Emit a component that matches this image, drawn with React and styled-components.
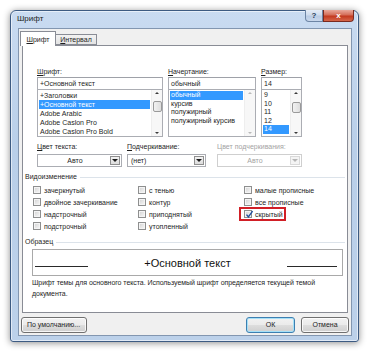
import styled, { createGlobalStyle } from 'styled-components';

const GlobalStyle = createGlobalStyle`
    html, body {
        margin: 0;
        padding: 0;
        background: #ffffff;
    }
    body {
        width: 369px;
        height: 354px;
        overflow: hidden;
        font-family: "Liberation Sans", Arial, sans-serif;
        font-size: 7px;
        color: #1e1e1e;
    }
    * {
        box-sizing: border-box;
    }
`

const Window = styled.div`
    margin: 10px 0 0 10px;
    width: 349px;
    height: 332px;
    border: 1px solid #3d5b82;
    border-radius: 6px 6px 3px 3px;
    background: linear-gradient(180deg, #c9dbf1 0%, #b9cfe9 40%, #bcd1ea 100%);
    box-shadow: 0 1px 7px rgba(0, 0, 0, 0.45), inset 0 0 0 1px rgba(255, 255, 255, 0.55);
    display: flex;
    flex-direction: column;
    padding: 0 6px 5px 7px;
`

const TitleBar = styled.div`
    height: 17px;
    display: flex;
    justify-content: space-between;
    align-items: flex-start;
`

const Title = styled.div`
    padding-top: 3px;
    margin-left: -1px;
    line-height: 9px;
    font-size: 8px;
    color: #1b1b1b;
`

const CaptionButtons = styled.div`
    display: flex;
    margin-top: -1px;
    margin-right: -2px;
`

const CaptionButton = styled.div`
    width: ${props => props.w};
    height: 12px;
    display: flex;
    align-items: center;
    justify-content: center;
    border: 1px solid ${props => props.close ? '#7a2a1f' : '#6d85a5'};
    border-top: none;
    border-radius: ${props => props.close ? '0 0 4px 0' : '0 0 0 4px'};
    background: ${props => props.close
        ? 'linear-gradient(180deg, #e9a99b 0%, #d46d58 45%, #c3391f 55%, #d5664a 100%)'
        : 'linear-gradient(180deg, #e4ecf6 0%, #cfdcee 45%, #b9cbe4 55%, #c9d8ec 100%)'};
    color: ${props => props.close ? '#ffffff' : '#2b3f5c'};
    font-size: 8px;
    font-weight: bold;
    line-height: 1;
`

const Client = styled.div`
    flex: 1;
    background: #f0f0f0;
    border: 1px solid #8296b0;
    padding: 2px 0 0 1px;
    display: flex;
    flex-direction: column;
`

const TabStrip = styled.div`
    height: 14px;
    display: flex;
    align-items: flex-end;
`

const Tab = styled.div`
    position: relative;
    z-index: ${props => props.active ? 2 : 0};
    width: ${props => props.w};
    height: ${props => props.active ? '15px' : '11px'};
    margin-bottom: ${props => props.active ? '-1px' : '0'};
    border: 1px solid #898c95;
    border-bottom: ${props => props.active ? 'none' : '1px solid #898c95'};
    border-left: ${props => props.noLeft ? 'none' : '1px solid #898c95'};
    background: ${props => props.active ? '#ffffff' : 'linear-gradient(180deg, #f2f2f2, #e3e3e3)'};
    display: flex;
    justify-content: center;
    padding-top: ${props => props.active ? '4px' : '1px'};
    line-height: 8px;
`

const Panel = styled.div`
    position: relative;
    z-index: 1;
    margin-left: 2px;
    width: 326px;
    height: 268px;
    background: #ffffff;
    border: 1px solid #898c95;
`

const FontBlock = styled.div`
    padding: 21px 0 0 14px;
`

const Row = styled.div`
    display: flex;
    gap: ${props => props.gap};
    margin-top: ${props => props.mt || '0'};
`

const Column = styled.div`
    width: ${props => props.w};
    margin-left: ${props => props.ml || '0'};
    display: flex;
    flex-direction: column;
`

const Label = styled.div`
    height: 10px;
    line-height: 10px;
    margin-bottom: ${props => props.mb || '0'};
    color: ${props => props.disabled ? '#a3a3a3' : '#1e1e1e'};
    white-space: nowrap;

    u {
        text-decoration-thickness: 1px;
        text-underline-offset: 1px;
    }
`

const Input = styled.div`
    height: 13px;
    border: 1px solid #abadb3;
    border-top-color: #9ea1a8;
    padding-left: 2px;
    line-height: 11px;
    white-space: nowrap;
    overflow: hidden;
`

const List = styled.div`
    height: 47px;
    border: 1px solid #abadb3;
    border-top: none;
    display: flex;
`

const ListItems = styled.div`
    flex: 1;
    padding: 1px 1px 0 1px;
    overflow: hidden;
`

const ListItem = styled.div`
    height: ${props => props.h || '9px'};
    line-height: ${props => props.h || '9px'};
    padding-left: 1px;
    white-space: nowrap;
    background: ${props => props.selected ? '#3399ff' : 'transparent'};
    color: ${props => props.selected ? '#ffffff' : '#1e1e1e'};
`

const ScrollBar = styled.div`
    width: 11px;
    display: flex;
    flex-direction: column;
    align-items: center;
    justify-content: space-between;
    padding: 2px 0;
    background: #f7f7f7;
    border-left: 1px solid #eeeeee;
    position: relative;
`

const Arrow = styled.div`
    width: 0;
    height: 0;
    border-left: 2px solid transparent;
    border-right: 2px solid transparent;
    border-${props => props.up ? 'bottom' : 'top'}: 2px solid ${props => props.faded ? '#b9b9b9' : '#3a3a3a'};
`

const Thumb = styled.div`
    position: absolute;
    left: 1px;
    top: ${props => props.top};
    width: 9px;
    height: 11px;
    border: 1px solid #9a9a9a;
    border-radius: 2px;
    background: linear-gradient(90deg, #f2f2f2, #dedede);
`

const Select = styled.div`
    height: 13px;
    border: 1px solid ${props => props.disabled ? '#cfcfcf' : '#abadb3'};
    display: flex;
`

const SelectValue = styled.div`
    flex: 1;
    line-height: 11px;
    padding-left: 3px;
    text-align: ${props => props.center ? 'center' : 'left'};
    color: ${props => props.disabled ? '#a3a3a3' : '#1e1e1e'};
`

const SelectButton = styled.div`
    width: 10px;
    margin: 1px;
    border: 1px solid ${props => props.disabled ? '#d9d9d9' : '#8f8f8f'};
    background: ${props => props.disabled ? '#f4f4f4' : 'linear-gradient(180deg, #f3f3f3, #dcdcdc)'};
    display: flex;
    align-items: center;
    justify-content: center;
`

const DownTriangle = styled.div`
    width: 0;
    height: 0;
    border-left: 3px solid transparent;
    border-right: 3px solid transparent;
    border-top: 3px solid ${props => props.disabled ? '#b5b5b5' : '#1a1a1a'};
`

const GroupHeader = styled.div`
    display: flex;
    align-items: center;
    gap: 3px;
    height: 10px;
    margin: ${props => props.mt} 2px 0 2px;
    line-height: 10px;

    &::after {
        content: '';
        flex: 1;
        height: 1px;
        background: #dce3ea;
    }
`

const CheckGrid = styled.div`
    display: grid;
    grid-template-columns: 105px 106px 1fr;
    grid-auto-rows: 12px;
    padding-left: 10px;
    margin-top: 2px;
`

const CheckItem = styled.div`
    display: flex;
    align-items: center;
    gap: 3px;
    white-space: nowrap;
    ${props => props.marked && `
        margin-left: -5px;
        margin-top: -1px;
        width: 47px;
        height: 14px;
        padding-left: 3px;
        border: 2px solid #d11f26;
    `}
`

const Box = styled.div`
    width: 8px;
    height: 8px;
    border: 1px solid #8e8f8f;
    background: linear-gradient(135deg, #cfcfcf 0%, #e6e6e6 50%, #f7f7f7 100%);
    box-shadow: inset 0 0 0 1px #f4f4f4;
    position: relative;
    flex-shrink: 0;
`

const Check = styled.svg`
    position: absolute;
    left: 0;
    top: -1px;
`

const Preview = styled.div`
    margin: 2px 0 0 9px;
    width: 311px;
    height: 27px;
    border: 1px solid #a9a9a9;
    display: flex;
    align-items: center;
    justify-content: space-between;
    padding: 0 5px 0 2px;
`

const PreviewLine = styled.div`
    width: ${props => props.w};
    height: 1px;
    margin-top: 8px;
    background: #2a2a2a;
`

const PreviewText = styled.div`
    font-size: 11px;
    color: #111111;
`

const Description = styled.div`
    margin: 1px 0 0 9px;
    line-height: 11px;
`

const DescLine = styled.div`
    white-space: nowrap;
    letter-spacing: -0.05px;
`

const ButtonRow = styled.div`
    display: flex;
    align-items: center;
    margin-top: 4px;
    padding-left: 1px;
`

const Button = styled.div`
    width: ${props => props.w};
    height: 16px;
    margin-left: ${props => props.ml || '0'};
    border: 1px solid ${props => props.primary ? '#3c7fb1' : '#707070'};
    border-radius: 3px;
    background: linear-gradient(180deg, #f2f2f2 0%, #ebebeb 48%, #dddddd 52%, #cfcfcf 100%);
    box-shadow: inset 0 0 0 1px ${props => props.primary ? '#a6e0f7' : 'rgba(255, 255, 255, 0.8)'};
    display: flex;
    align-items: center;
    justify-content: ${props => props.left ? 'flex-start' : 'center'};
    padding-left: ${props => props.left ? '5px' : '0'};
    line-height: 10px;
`

function CheckBox({ label, checked, marked }) {
    return (
        <CheckItem marked={marked}>
            <Box>
                {checked && (
                    <Check width="9" height="9" viewBox="0 0 9 9">
                        <path d="M1.5 4.6 L3.4 6.8 L7.6 1.2" fill="none" stroke="#1f4f9e" strokeWidth="1.4" />
                    </Check>
                )}
            </Box>
            <span>{label}</span>
        </CheckItem>
    );
}

function Scroll({ thumb, faded }) {
    return (
        <ScrollBar>
            <Arrow up faded={faded} />
            {thumb && <Thumb top={thumb} />}
            <Arrow faded={faded} />
        </ScrollBar>
    );
}

function Dropdown({ value, center, disabled }) {
    return (
        <Select disabled={disabled}>
            <SelectValue center={center} disabled={disabled}>{value}</SelectValue>
            <SelectButton disabled={disabled}>
                <DownTriangle disabled={disabled} />
            </SelectButton>
        </Select>
    );
}

const fonts = ['+Заголовки', '+Основной текст', 'Adobe Arabic', 'Adobe Caslon Pro', 'Adobe Caslon Pro Bold'];
const styles = ['обычный', 'курсив', 'полужирный', 'полужирный курсив'];
const sizes = ['9', '10', '11', '12', '14'];

function App() {
    return (
        <>
            <GlobalStyle />
            <Window>
                <TitleBar>
                    <Title>Шрифт</Title>
                    <CaptionButtons>
                        <CaptionButton w="18px">?</CaptionButton>
                        <CaptionButton w="31px" close>x</CaptionButton>
                    </CaptionButtons>
                </TitleBar>
                <Client>
                    <TabStrip>
                        <Tab active w="36px"><u>Ш</u>рифт</Tab>
                        <Tab w="41px" noLeft><u>И</u>нтервал</Tab>
                    </TabStrip>
                    <Panel>
                        <FontBlock>
                            <Row gap="5px">
                                <Column w="126px">
                                    <Label><u>Ш</u>рифт:</Label>
                                    <Input>+Основной текст</Input>
                                    <List>
                                        <ListItems>
                                            {fonts.map((f, i) => (
                                                <ListItem key={f} selected={i === 1}>{f}</ListItem>
                                            ))}
                                        </ListItems>
                                        <Scroll thumb="11px" />
                                    </List>
                                </Column>
                                <Column w="88px">
                                    <Label><u>Н</u>ачертание:</Label>
                                    <Input>обычный</Input>
                                    <List>
                                        <ListItems>
                                            {styles.map((s, i) => (
                                                <ListItem key={s} selected={i === 0} h="8.5px">{s}</ListItem>
                                            ))}
                                        </ListItems>
                                        <Scroll faded />
                                    </List>
                                </Column>
                                <Column w="41px">
                                    <Label><u>Р</u>азмер:</Label>
                                    <Input>14</Input>
                                    <List>
                                        <ListItems>
                                            {sizes.map((s, i) => (
                                                <ListItem key={s} selected={i === 4} h="8.5px">{s}</ListItem>
                                            ))}
                                        </ListItems>
                                        <Scroll thumb="12px" />
                                    </List>
                                </Column>
                            </Row>
                            <Row gap="5px" mt="5px">
                                <Column w="85px">
                                    <Label mb="2px"><u>Ц</u>вет текста:</Label>
                                    <Dropdown value="Авто" center />
                                </Column>
                                <Column w="79px">
                                    <Label mb="2px"><u>П</u>одчеркивание:</Label>
                                    <Dropdown value="(нет)" />
                                </Column>
                                <Column w="85px" ml="6px">
                                    <Label mb="2px" disabled>Цвет подчеркивания:</Label>
                                    <Dropdown value="Авто" center disabled />
                                </Column>
                            </Row>
                        </FontBlock>
                        <GroupHeader mt="5px">Видоизменение</GroupHeader>
                        <CheckGrid>
                            <CheckBox label="зачеркнутый" />
                            <CheckBox label="с тенью" />
                            <CheckBox label="малые прописные" />
                            <CheckBox label="двойное зачеркивание" />
                            <CheckBox label="контур" />
                            <CheckBox label="все прописные" />
                            <CheckBox label="надстрочный" />
                            <CheckBox label="приподнятый" />
                            <CheckBox label="скрытый" checked marked />
                            <CheckBox label="подстрочный" />
                            <CheckBox label="утопленный" />
                        </CheckGrid>
                        <GroupHeader mt="5px">Образец</GroupHeader>
                        <Preview>
                            <PreviewLine w="53px" />
                            <PreviewText>+Основной текст</PreviewText>
                            <PreviewLine w="50px" />
                        </Preview>
                        <Description>
                            <DescLine>Шрифт темы для основного текста. Используемый шрифт определяется текущей темой</DescLine>
                            <DescLine>документа.</DescLine>
                        </Description>
                    </Panel>
                    <ButtonRow>
                        <Button w="66px" left>По умолчанию...</Button>
                        <Button w="49px" ml="159px" primary>ОК</Button>
                        <Button w="48px" ml="6px">Отмена</Button>
                    </ButtonRow>
                </Client>
            </Window>
        </>
    );
}

export default App;
